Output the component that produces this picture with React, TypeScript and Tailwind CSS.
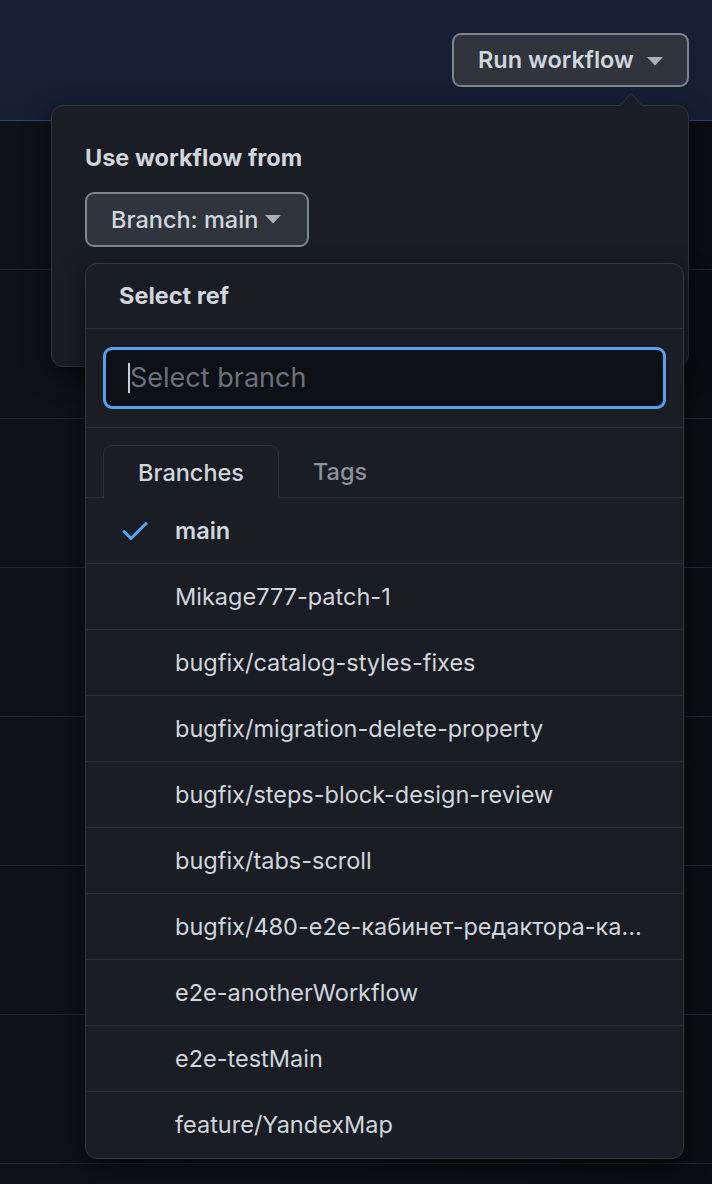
const branches = [
  "main",
  "Mikage777-patch-1",
  "bugfix/catalog-styles-fixes",
  "bugfix/migration-delete-property",
  "bugfix/steps-block-design-review",
  "bugfix/tabs-scroll",
  "bugfix/480-e2e-кабинет-редактора-каталога",
  "e2e-anotherWorkflow",
  "e2e-testMain",
  "feature/YandexMap",
];

function Caret({ className = "" }: { className?: string }) {
  return (
    <svg width="16" height="9" viewBox="0 0 16 9" className={className}>
      <path d="M0 0h16L8 8.5z" fill="currentColor" />
    </svg>
  );
}

export default function App() {
  return (
    <div className="relative w-[712px] h-[1184px] overflow-hidden bg-[#0d1117] font-['Inter','Noto_Sans',sans-serif] text-[#c9d1d9]">
      {/* Page behind the menu */}
      <div className="h-[121px] bg-gradient-to-b from-[#172037] to-[#161e31] border-b border-[#2b4878] flex items-start justify-end pt-[33px] pr-[23px]">
        <button className="h-[54px] w-[237px] rounded-[9px] border-2 border-[#7d8590] bg-[#30353d] flex items-center pl-[24px] gap-[13px] text-[23.5px] font-semibold text-[#d0d6dd]">
          Run workflow
          <Caret className="text-[#a9b0b9] mt-[2px]" />
        </button>
      </div>
      <div className="bg-gradient-to-r from-[#0e1117] via-[#0d1016] to-[#0b0d12]">
        {Array.from({ length: 8 }).map((_, i) => (
          <div key={i} className="h-[149px] border-b border-[#22262d]" />
        ))}
      </div>

      {/* Outer popover */}
      <div className="absolute left-[51px] top-[105px] w-[638px] h-[262px] rounded-[12px] border border-[#30353d] bg-[#1a1d23] shadow-[0_8px_24px_rgba(0,0,0,0.5)] px-[33px] pt-[38px]">
        <svg
          width="24"
          height="14"
          viewBox="0 0 24 14"
          className="absolute -top-[13px] left-[567px]"
        >
          <path d="M0 13.5L12 0.5L24 13.5" fill="#1a1d23" stroke="#30353d" strokeWidth="1" />
        </svg>
        <div className="text-[23.5px] font-bold text-[#d0d6dd] leading-[28px]">Use workflow from</div>
        <button className="mt-[20px] h-[55px] w-[224px] rounded-[9px] border-2 border-[#7d8590] bg-[#30353d] flex items-center pl-[24px] gap-[7px] text-[23.5px] font-medium text-[#d0d6dd]">
          <span>Branch: main</span>
          <Caret className="text-[#a9b0b9]" />
        </button>
      </div>

      {/* Select ref menu */}
      <div className="absolute left-[85px] top-[263px] w-[599px] rounded-[12px] border border-[#33383f] bg-[#1a1d24] shadow-[0_8px_24px_rgba(0,0,0,0.6)] overflow-hidden">
        <div className="h-[65px] flex items-center pl-[33px] text-[23.5px] font-bold text-[#d0d6dd] border-b border-[#2a2e35]">
          Select ref
        </div>
        <div className="h-[99px] px-[17px] pt-[18px] border-b border-[#2a2e35]">
          <div className="h-[62px] rounded-[9px] border-[3px] border-[#5a9ef0] bg-[#0d1117] flex items-center pl-[22px]">
            <span className="w-[2px] h-[30px] bg-[#c9d1d9]" />
            <span className="text-[27px] text-[#6b727c]">Select branch</span>
          </div>
        </div>
        <div className="h-[70px] flex items-end px-[17px] border-b border-[#2a2e35]">
          <div className="h-[53px] w-[176px] -mb-px rounded-t-[9px] border border-b-0 border-[#2c3138] bg-[#1a1d24] flex items-center justify-center pt-[2px] text-[23.5px] font-medium text-[#d0d6dd]">
            Branches
          </div>
          <div className="h-[53px] pl-[34px] flex items-center pt-[2px] text-[23.5px] font-medium text-[#8b929b]">
            Tags
          </div>
        </div>
        {branches.map((b, i) => (
          <div
            key={b}
            className={`h-[66px] flex items-center ${i < branches.length - 1 ? "border-b border-[#2a2e35]" : ""}`}
          >
            <div className="w-[89px] flex pl-[36px]">
              {i === 0 && (
                <svg width="26" height="20" viewBox="0 0 26 20">
                  <path
                    d="M2 10.5L9 17.5L24 2.5"
                    fill="none"
                    stroke="#58a6ff"
                    strokeWidth="3"
                    strokeLinecap="round"
                    strokeLinejoin="round"
                  />
                </svg>
              )}
            </div>
            <span
              className={`text-[23.5px] truncate max-w-[476px] ${i === 0 ? "font-semibold" : ""} text-[#d0d6dd]`}
            >
              {b}
            </span>
          </div>
        ))}
      </div>
    </div>
  );
}
